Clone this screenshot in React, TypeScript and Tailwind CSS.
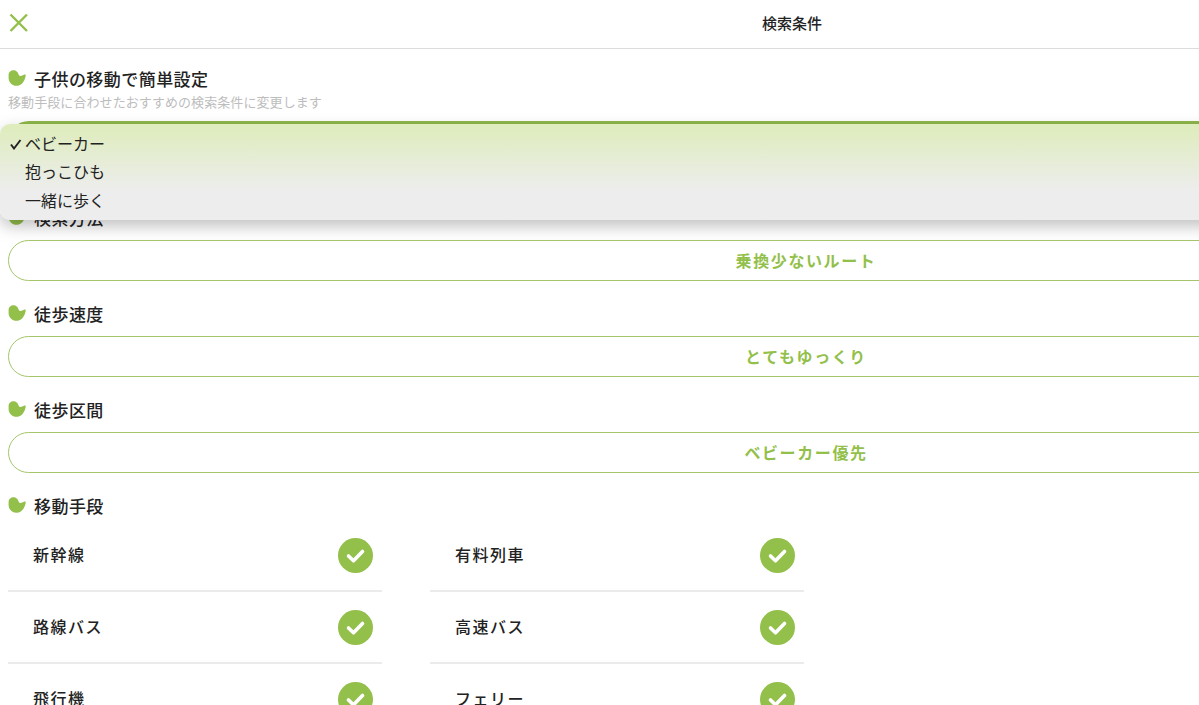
const font = { fontFamily: '"Noto Sans CJK JP", "Noto Sans", sans-serif' };

function Bird() {
  return (
    <svg width="18" height="16" viewBox="0 0 18 16" className="shrink-0">
      <path d="M0.6 5 C0.6 2 3 0.2 5.6 0.2 C8.2 0.2 9.8 2 10.4 4 C11 6 12.6 6.6 14.2 5.6 C15.3 4.8 16.6 4 17.4 4.6 C18 5.1 17.6 7.2 16.8 9 C15.2 13 12.4 15.8 8.6 15.8 C4 15.8 0.6 12 0.6 8 Z" fill="#93bf4b" />
    </svg>
  );
}

function Heading({ children }: { children: string }) {
  return (
    <div className="flex items-center gap-2 h-6">
      <div className="-mt-[2px] flex"><Bird /></div>
      <span className="text-[17px] tracking-[0.45px] font-medium text-[#222]">{children}</span>
    </div>
  );
}

function Pill({ children }: { children: string }) {
  return (
    <div className="mt-[10px] h-[41px] rounded-[21px] border-[1.5px] border-[#a4c66b] flex items-center justify-center pl-[2px] pb-[2px] text-[16px] tracking-[1.6px] font-bold text-[#93bf4b]">
      {children}
    </div>
  );
}

function Row({ label }: { label: string }) {
  return (
    <div className="h-[72px] border-b-2 border-[#ebebeb] flex items-center justify-between pl-[25px] pr-[9px]">
      <span className="text-[16px] tracking-[1.5px] font-medium text-[#222] pb-[2px]">{label}</span>
      <svg width="35" height="35" viewBox="0 0 35 35">
        <circle cx="17.5" cy="17.5" r="17.5" fill="#93bf4b" />
        <path d="M10.5 18 L15.5 22.8 L24.5 13.5" fill="none" stroke="#fff" strokeWidth="3.6" strokeLinecap="round" strokeLinejoin="round" />
      </svg>
    </div>
  );
}

export default function App() {
  const rows = ["新幹線", "有料列車", "路線バス", "高速バス", "飛行機", "フェリー"];
  return (
    <div className="relative w-[1199px] h-[705px] overflow-hidden bg-white" style={font}>
      <div className="w-[1610px]">
        <header className="relative h-[49px] border-b border-[#dcdcdc] flex items-center justify-center pr-[26px] pb-[2px]">
          <svg width="20" height="20" viewBox="0 0 20 20" className="absolute left-[9px] top-[13px]">
            <path d="M1.5 1.5 L18 18 M18 1.5 L1.5 18" stroke="#93bf4b" strokeWidth="2.4" fill="none" />
          </svg>
          <span className="text-[15px] font-medium text-[#222]">検索条件</span>
        </header>

        <main className="px-2 pt-[18px]">
          <section>
            <Heading>子供の移動で簡単設定</Heading>
            <p className="h-5 leading-5 mt-px text-[13px] tracking-[0.08px] text-[#bdbdbd]">移動手段に合わせたおすすめの検索条件に変更します</p>
            <div className="mt-[9px] h-[64px] rounded-[21px] bg-[#8fb84a]" />
          </section>

          <section className="mt-[21px]">
            <Heading>検索方法</Heading>
            <Pill>乗換少ないルート</Pill>
          </section>
          <section className="mt-[21px]">
            <Heading>徒歩速度</Heading>
            <Pill>とてもゆっくり</Pill>
          </section>
          <section className="mt-[21px]">
            <Heading>徒歩区間</Heading>
            <Pill>ベビーカー優先</Pill>
          </section>
          <section className="mt-[21px]">
            <Heading>移動手段</Heading>
            <div className="grid grid-cols-[374px_374px] gap-x-12 mt-[2px]">
              {rows.map((r) => (
                <Row key={r} label={r} />
              ))}
            </div>
          </section>
        </main>
      </div>

      <div className="absolute left-0 top-[124px] w-[1240px] h-[96px] rounded-l-[10px] bg-gradient-to-b from-[#dfecbe] from-[5%] to-[#ededed] to-[70%] shadow-[0_6px_16px_rgba(0,0,0,0.25)] text-[16px] text-[#222] pt-[5px]">
        <div className="relative h-7 leading-7 pl-[25px]">
          <svg width="12" height="11" viewBox="0 0 12 11" className="absolute left-[10px] top-[10px]">
            <path d="M1 5.5 L4 9.5 L10.5 1" fill="none" stroke="#222" strokeWidth="1.9" />
          </svg>
          ベビーカー
        </div>
        <div className="h-7 leading-7 pl-[25px]">抱っこひも</div>
        <div className="h-7 leading-7 pl-[25px] mt-px">一緒に歩く</div>
      </div>
    </div>
  );
}
